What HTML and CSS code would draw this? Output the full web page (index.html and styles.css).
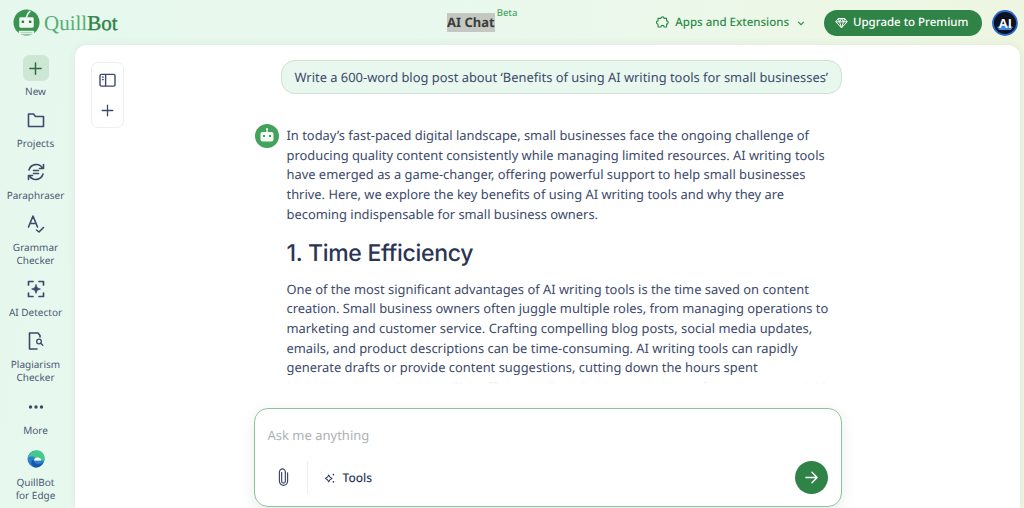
FILE: index.html
```html
<!DOCTYPE html>
<html lang="en">
<head>
<meta charset="utf-8">
<title>QuillBot AI Chat</title>
<link rel="stylesheet" href="styles.css">
</head>
<body>
<div class="app">
  <header class="topbar">
    <div class="brand">
      <svg class="logo" viewBox="0 0 28 28" width="27" height="27">
        <circle cx="14" cy="14" r="13.5" fill="#3a9350"/>
        <path d="M14 8.500 C14.500 6 15.500 4 17.500 2.500" stroke="#e8f7ec" stroke-width="1.800" stroke-linecap="round" fill="none"/>
        <rect x="6.500" y="8.500" width="15" height="11" rx="1.500" fill="#f2f8f3"/>
        <rect x="9" y="12" width="2.500" height="2.500" fill="#2f7d42"/>
        <rect x="16.500" y="12" width="2.500" height="2.500" fill="#2f7d42"/>
        <rect x="6" y="22.500" width="16" height="4" rx="1" fill="#e6f3e9"/>
        <path d="M8 24.500 H20" stroke="#9cc8a8" stroke-width="0.800"/>
      </svg>
      <span class="wordmark"><span class="wm-light">Quill</span><span class="wm-dark">Bot</span></span>
    </div>
    <div class="title-wrap">
      <span class="title">AI Chat</span><sup class="beta">Beta</sup>
    </div>
    <div class="top-actions">
      <a class="apps">
        <svg viewBox="0 0 16 16" width="13" height="13" fill="none" stroke="#2f8a4a" stroke-width="1.4" stroke-linejoin="round"><path d="M6 3 a2 2 0 0 1 4 0 h3 v3 a2 2 0 0 1 0 4 v3.500 h-3 a2 2 0 0 0 -4 0 h-3.500 v-3.500 a2 2 0 0 1 0 -4 v-3 z"/></svg>
        <span>Apps and Extensions</span>
        <svg class="chev" viewBox="0 0 10 10" width="8" height="8" fill="none" stroke="#2f8a4a" stroke-width="1.500"><path d="M1.500 3.500 L5 7 L8.500 3.500"/></svg>
      </a>
      <a class="upgrade">
        <svg viewBox="0 0 16 14" width="13" height="12" fill="none" stroke="#fff" stroke-width="1.200" stroke-linejoin="round"><path d="M4 1.500 h8 l3 4 -7 7.500 -7 -7.500 z M1 5.500 h14 M5.500 5.500 L8 13 L10.500 5.500 M4 1.500 L5.500 5.500 L8 1.500 L10.500 5.500 L12 1.500"/></svg>
        <span>Upgrade to Premium</span>
      </a>
      <div class="avatar">
        <svg viewBox="0 0 26 26" width="26" height="26">
          <circle cx="13" cy="13" r="12" fill="#0d1222" stroke="#2a6ac8" stroke-width="1.800"/>
          <path d="M5 17 C9 15 17 15 21 17 L19 20 H7 Z" fill="#3a86d8"/>
          <text class="avatar-text" x="13" y="17.500" text-anchor="middle">AI</text>
        </svg>
      </div>
    </div>
  </header>
  <div class="body">
    <nav class="sidebar">
      <a class="nav-item">
        <span class="new-box"><svg viewBox="0 0 16 16" width="15" height="15" fill="none" stroke="#2f6b40" stroke-width="1.600" stroke-linecap="round"><path d="M8 2 V14 M2 8 H14"/></svg></span>
        <span class="label">New</span>
      </a>
      <a class="nav-item">
        <svg class="ico" viewBox="0 0 20 20" width="20" height="20" fill="none" stroke="#3d4a6b" stroke-width="1.600" stroke-linejoin="round"><path d="M2.500 4 h5 l2 2.500 h8 v10 h-15 z"/></svg>
        <span class="label">Projects</span>
      </a>
      <a class="nav-item">
        <svg class="ico" viewBox="0 0 20 20" width="20" height="20" fill="none" stroke="#3d4a6b" stroke-width="1.600" stroke-linecap="round"><path d="M3 8 a7.500 7.500 0 0 1 13.500 -2 M17 12 a7.500 7.500 0 0 1 -13.500 2 M7.500 8.500 h5 M7.500 11.500 h5"/><path d="M17.500 2.500 v4 h-4 M2.500 17.500 v-4 h4" stroke-linejoin="round"/></svg>
        <span class="label">Paraphraser</span>
      </a>
      <a class="nav-item">
        <svg class="ico" viewBox="0 0 20 20" width="20" height="20" fill="none" stroke="#3d4a6b" stroke-width="1.600" stroke-linecap="round" stroke-linejoin="round"><path d="M2.500 13 L7 2 L11.500 13 M4 9.500 H10 M10.500 16 L13 18 L17.500 13.500"/></svg>
        <span class="label">Grammar<br>Checker</span>
      </a>
      <a class="nav-item">
        <svg class="ico" viewBox="0 0 20 20" width="20" height="20" fill="none" stroke="#3d4a6b" stroke-width="1.700" stroke-linecap="round" stroke-linejoin="round"><path d="M2.500 6 V2.500 H7 M13 2.500 H17.500 V6 M17.500 14 V17.500 H13 M7 17.500 H2.500 V14"/><path d="M10 5.500 L11.300 8.700 L14.500 10 L11.300 11.300 L10 14.500 L8.700 11.300 L5.500 10 L8.700 8.700 Z" fill="#3d4a6b" stroke-width="0.600"/></svg>
        <span class="label">AI Detector</span>
      </a>
      <a class="nav-item">
        <svg class="ico" viewBox="0 0 20 20" width="20" height="20" fill="none" stroke="#3d4a6b" stroke-width="1.600" stroke-linecap="round" stroke-linejoin="round"><path d="M11 18 H3.500 V2 H12 L14 4.500 V6"/><circle cx="13" cy="10.500" r="2.300" stroke-width="1.300"/><path d="M15 12.500 L16.800 14.300" stroke-width="1.300"/></svg>
        <span class="label">Plagiarism<br>Checker</span>
      </a>
      <a class="nav-item">
        <svg class="ico" viewBox="0 0 20 20" width="20" height="20" fill="#3d4a6b"><circle cx="4.500" cy="10" r="1.700"/><circle cx="10" cy="10" r="1.700"/><circle cx="15.500" cy="10" r="1.700"/></svg>
        <span class="label">More</span>
      </a>
      <a class="nav-item">
        <svg class="ico" viewBox="0 0 20 20" width="20" height="20">
          <circle cx="10" cy="10" r="8.500" fill="#2f7fd0"/>
          <path d="M2 9 C3 3 9 0.500 14 2 C18 3.500 19 8 18.500 11.500 L10 11.500 C10 9 8 7.500 6 7.500 C4 7.500 2.500 8 2 9 Z" fill="#43c98a"/>
          <path d="M8 11.500 C8 14 10 15 12.500 15 C14.500 15 16.500 14 17.500 13 C16 17 12 19 9 18.500 C6 18 4.500 14 6 11 Z" fill="#1557a8"/>
          <path d="M8 11.500 C8 9 11 8 13.500 9 C15 9.500 15.500 10.500 15 11.500 Z" fill="#fff"/>
        </svg>
        <span class="label">QuillBot<br>for Edge</span>
      </a>
    </nav>
    <main class="main">
      <div class="panel-tools">
        <svg viewBox="0 0 18 16" width="17" height="15" fill="none" stroke="#3d4a6b" stroke-width="1.500"><rect x="1" y="1.500" width="16" height="12.500" rx="1.500"/><path d="M7 1.500 V14"/><path d="M3 4.500 H5 M3 7 H5" stroke-width="1.300"/></svg>
        <svg viewBox="0 0 16 16" width="13" height="13" fill="none" stroke="#3d4a6b" stroke-width="1.600" stroke-linecap="round"><path d="M8 1.500 V14.500 M1.500 8 H14.500"/></svg>
      </div>
      <div class="scroll">
        <div class="column">
          <div class="bubble">Write a 600-word blog post about ‘Benefits of using AI writing tools for small businesses’</div>
          <div class="answer">
            <svg class="bot" viewBox="0 0 24 24" width="24" height="24">
              <circle cx="12" cy="12" r="12" fill="#43a35c"/>
              <path d="M12 5 V8" stroke="#f3f9f4" stroke-width="1.400"/>
              <circle cx="12" cy="5" r="1" fill="#f3f9f4"/>
              <rect x="5.500" y="8" width="13" height="9.500" rx="2" fill="#f3f9f4"/>
              <rect x="8" y="11" width="2" height="2" fill="#43a35c"/>
              <rect x="14" y="11" width="2" height="2" fill="#43a35c"/>
            </svg>
            <div class="answer-text">
              <p>In today’s fast-paced digital landscape, small businesses face the ongoing challenge of producing quality content consistently while managing limited resources. AI writing tools have emerged as a game-changer, offering powerful support to help small businesses thrive. Here, we explore the key benefits of using AI writing tools and why they are becoming indispensable for small business owners.</p>
              <h2>1. Time Efficiency</h2>
              <p>One of the most significant advantages of AI writing tools is the time saved on content creation. Small business owners often juggle multiple roles, from managing operations to marketing and customer service. Crafting compelling blog posts, social media updates, emails, and product descriptions can be time-consuming. AI writing tools can rapidly generate drafts or provide content suggestions, cutting down the hours spent brainstorming and writing. This efficiency allows business owners to focus on core activities and strategic growth.</p>
            </div>
          </div>
        </div>
      </div>
      <div class="composer">
        <div class="placeholder">Ask me anything</div>
        <div class="composer-row">
          <svg class="clip" viewBox="0 0 14 20" width="13" height="19" fill="none" stroke="#3d4a6b" stroke-width="1.300" stroke-linecap="round"><path d="M5 4.500 V14 a2 2 0 0 0 4 0 V4 a3.200 3.200 0 0 0 -6.400 0 V14 a4.400 4.400 0 0 0 8.800 0 V5"/></svg>
          <span class="divider"></span>
          <a class="tools">
            <svg viewBox="0 0 14 14" width="12" height="12" fill="none" stroke="#2c3a5c" stroke-width="1.200" stroke-linejoin="round"><path d="M5.500 3.500 L7 6 L9.500 7.500 L7 9 L5.500 11.500 L4 9 L1.500 7.500 L4 6 Z"/><circle cx="11" cy="3" r="1" fill="#2c3a5c" stroke="none"/><circle cx="11" cy="11.500" r="1" fill="#2c3a5c" stroke="none"/></svg>
            <span>Tools</span>
          </a>
          <button class="send" type="button" aria-label="Send">
            <svg viewBox="0 0 16 16" width="15" height="15" fill="none" stroke="#fff" stroke-width="1.500" stroke-linecap="round" stroke-linejoin="round"><path d="M2 8 H14 M8.500 2.500 L14 8 L8.500 13.500"/></svg>
          </button>
        </div>
      </div>
    </main>
  </div>
</div>
</body>
</html>
```
FILE: styles.css
```css
* { box-sizing: border-box; }
html, body { margin: 0; height: 100%; overflow: hidden; }
body {
  font-family: "Noto Sans", "Open Sans", sans-serif;
  color: #3d4a6b;
  text-rendering: geometricPrecision;
  background: linear-gradient(100deg, #e6f8ee 0%, #eaf8ec 50%, #eff6e0 100%);
}
a { text-decoration: none; color: inherit; }
.app { width: 1024px; height: 508px; display: flex; flex-direction: column; }

/* top bar */
.topbar { height: 45px; flex: none; display: flex; align-items: center; padding: 0 6px 0 13px; }
.brand { display: flex; align-items: center; gap: 4px; width: 434px; height: 45px; }
.logo { flex: none; margin-top: -1px; }
.wordmark { font-family: "Liberation Serif", serif; font-size: 21px; line-height: 28px; }
.wm-light { color: #55b071; }
.wm-dark { color: #2f8148; -webkit-text-stroke: 0.400px #2f8148; }
.title-wrap { display: flex; align-items: flex-start; height: 45px; padding-top: 13px; }
.title { font-weight: 700; font-size: 13px; line-height: 19px; color: #3b3d3b; background: #c3c8c3; }
.beta { font-size: 9.500px; line-height: 12px; font-weight: 500; color: #4aa565; margin: -6px 0 0 2px; vertical-align: baseline; }
.top-actions { display: flex; align-items: center; margin-left: auto; }
.apps { display: flex; align-items: center; gap: 6px; font-size: 11.500px; font-weight: 500; color: #2f8a4a; margin-right: 19px; }
.chev { margin-left: 2px; }
.upgrade { display: flex; align-items: center; gap: 5px; height: 26px; width: 158px; padding-left: 11px; border-radius: 13px; background: #2f8346; color: #fff; font-size: 11.500px; font-weight: 500; }
.avatar { width: 26px; height: 26px; margin-left: 10px; }
.avatar-text { font-family: "Liberation Sans", sans-serif; font-weight: 700; font-size: 13px; fill: #fff; }

/* layout */
.body { flex: 1; display: flex; min-height: 0; }
.sidebar { width: 75px; flex: none; display: flex; flex-direction: column; align-items: flex-start; padding-top: 10px; }
.nav-item { display: flex; flex-direction: column; align-items: center; width: 71px; text-align: center; padding-bottom: 12.100px; }
.new-box { width: 26px; height: 26px; border-radius: 6px; background: #cee6d4; display: flex; align-items: center; justify-content: center; margin-bottom: 4px; }
.ico { display: block; margin-bottom: 7px; }
.label { font-size: 10px; line-height: 13px; color: #4c5874; }

/* main area */
.main { position: relative; flex: none; width: 945px; height: 463px; background: #fff; border-radius: 12px 12px 0 0; box-shadow: 0 0 8px rgba(60,80,60,0.08); display: flex; flex-direction: column; align-items: center; }
.panel-tools { position: absolute; left: 16px; top: 17px; width: 33px; height: 66px; border: 1px solid #eceef0; border-radius: 7px; display: flex; flex-direction: column; align-items: center; justify-content: space-around; padding: 2px 0; }
.scroll { flex: 1; min-height: 0; width: 100%; overflow: hidden; }
.column { width: 588px; margin: 0 auto; padding-top: 15px; }
.bubble { margin-left: 27px; width: 561px; height: 34px; border: 1px solid #cfe0d6; border-radius: 14px; background: #e8f8ef; font-size: 12.900px; line-height: 32px; padding-left: 13px; white-space: nowrap; color: #3d4a6b; }
.answer { position: relative; display: flex; gap: 8px; margin-top: 19px; margin-left: 1px; height: 271px; overflow: hidden; }
.answer::after { content: ""; position: absolute; left: 0; right: 0; bottom: 0; height: 8px; background: linear-gradient(rgba(255,255,255,0.3), #fff); }
.bot { flex: none; margin-top: 11px; }
.answer-text { width: 555px; flex: none; font-size: 12.900px; line-height: 19.700px; color: #3d4a6b; padding-top: 13px; }
.answer-text p { margin: 0; }
.answer-text h2 { font-family: "Inter", sans-serif; font-weight: 500; font-size: 23px; line-height: 30px; color: #2a3553; margin: 13px 0 12px; letter-spacing: -0.300px; }

/* composer */
.composer { flex: none; width: 588px; height: 99px; margin-bottom: 1px; border: 1px solid #8cc49a; border-radius: 14px; background: #fff; box-shadow: 0 4px 14px rgba(40,60,50,0.10); padding: 16px 13px 0; display: flex; flex-direction: column; }
.placeholder { font-size: 13px; line-height: 20px; color: #aeb1b5; }
.composer-row { display: flex; align-items: center; margin-top: 16px; height: 33px; }
.clip { margin-left: 9px; }
.divider { width: 1px; height: 33px; background: #eceef0; margin-left: 17px; }
.tools { display: flex; align-items: center; gap: 7px; margin-left: 16px; font-size: 12px; font-weight: 500; color: #2c3a5c; }
.send { margin-left: auto; width: 33px; height: 33px; border: 0; border-radius: 50%; background: #2f8346; display: flex; align-items: center; justify-content: center; padding: 0; }
```
